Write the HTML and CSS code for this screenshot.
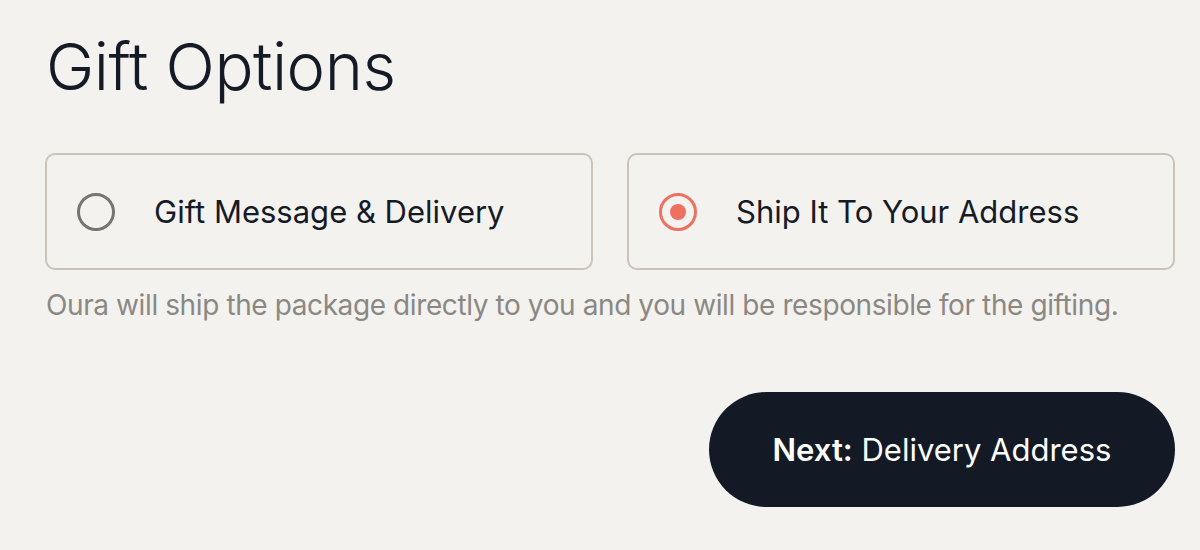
FILE: index.html
```html
<!DOCTYPE html>
<html lang="en">
<head>
    <meta charset="UTF-8">
    <meta name="viewport" content="width=device-width, initial-scale=1.0">
    <title>Gift Options</title>
    <link rel="stylesheet" href="styles.css">
</head>
<body>

    <div class="gift-options">
        <h1>Gift Options</h1>

        <div class="choices">
            <label class="choice">
                <input type="radio" name="gift" value="message">
                <span class="radio"></span>
                <span class="choice-label">Gift Message &amp; Delivery</span>
            </label>
            <label class="choice">
                <input type="radio" name="gift" value="ship" checked>
                <span class="radio"></span>
                <span class="choice-label">Ship It To Your Address</span>
            </label>
        </div>

        <p class="hint">Oura will ship the package directly to you and you will be responsible for the gifting.</p>

        <div class="actions">
            <button type="button" class="next-btn"><strong>Next:</strong> Delivery Address</button>
        </div>
    </div>

</body>
</html>
```

FILE: styles.css
```css
body {
    margin: 0;
    background-color: #f4f2ef;
    font-family: Inter, "Liberation Sans", sans-serif;
    color: #151b26;
}
.gift-options {
    padding: 22px 25px 0 45px;
}
h1 {
    margin: 0 0 0 1px;
    font-size: 65px;
    font-weight: 300;
    line-height: 90px;
    letter-spacing: -0.5px;
}
.choices {
    display: grid;
    grid-template-columns: 1fr 1fr;
    gap: 34px;
    margin-top: 41px;
}
.choice {
    display: flex;
    align-items: center;
    height: 113px;
    padding: 0 30px;
    border: 2px solid #cbc3b9;
    border-radius: 10px;
    cursor: pointer;
}
.choice input {
    display: none;
}
.radio {
    width: 32px;
    height: 32px;
    border: 3px solid #777571;
    border-radius: 50%;
    display: flex;
    align-items: center;
    justify-content: center;
    flex-shrink: 0;
}
.choice input:checked + .radio {
    border-color: #ec7161;
}
.choice input:checked + .radio::after {
    content: "";
    width: 16px;
    height: 16px;
    border-radius: 50%;
    background-color: #ec7161;
}
.choice-label {
    margin-left: 39px;
    font-size: 31px;
    font-weight: 400;
}
.hint {
    margin: 18px 0 0 1px;
    font-size: 28px;
    color: #8b8883;
    letter-spacing: -0.4px;
}
.actions {
    display: flex;
    justify-content: flex-end;
    margin-top: 70px;
}
.next-btn {
    width: 466px;
    height: 115px;
    border: none;
    border-radius: 58px;
    background-color: #131a26;
    color: #ffffff;
    font-family: inherit;
    font-size: 31px;
    font-weight: 400;
    cursor: pointer;
}
.next-btn strong {
    font-weight: 600;
}
```
